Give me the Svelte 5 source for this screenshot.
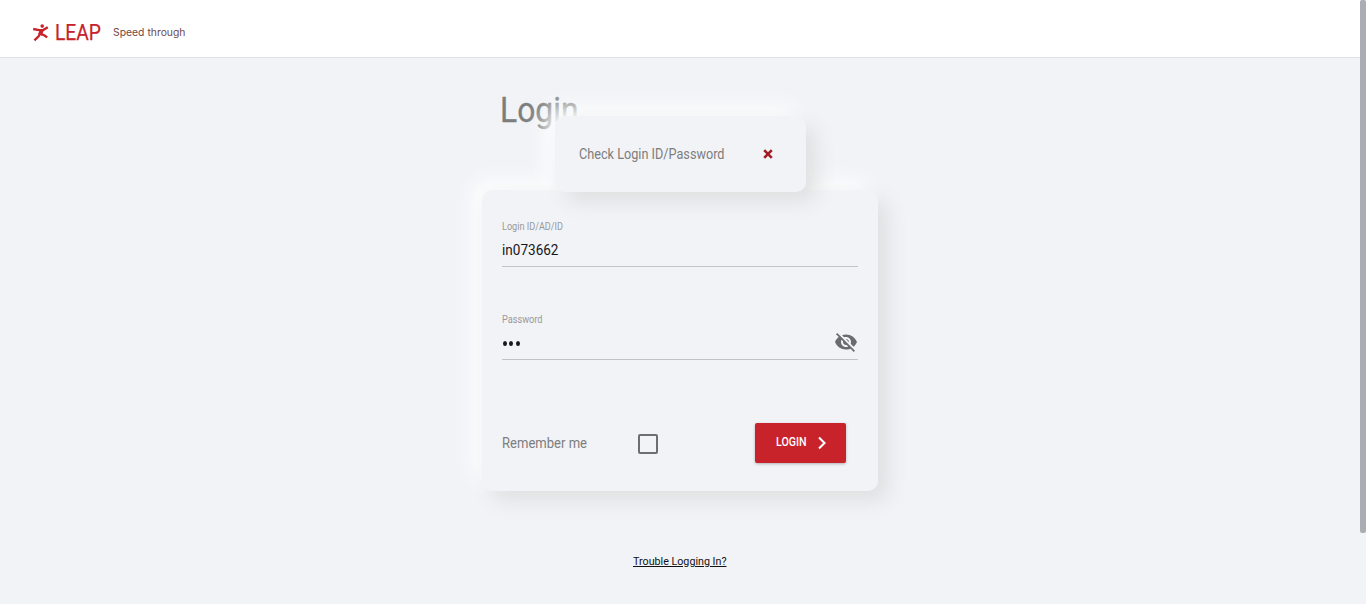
<script>
  let loginId = $state('in073662');

  // Condenses a label horizontally so that it fills the given width.
  function fit(node, width) {
    node.style.transform = `scaleX(${width / node.getBoundingClientRect().width})`;
  }
</script>

<div class="page">
  <header>
    <svg class="runner" viewBox="0 0 18 18" aria-hidden="true">
      <circle cx="10.2" cy="2.1" r="1.8" />
      <path d="M1.2 5 7 6.2 11.5 5.8 15.8 3.2M8 9.5 6.6 12.4 2.4 16.4M8.3 9.8 12.2 11.2 15.2 13.4" />
      <path class="torso" d="M10 5.6 8 10.8" />
    </svg>
    <span class="brand"><span class="fit" use:fit={46}>LEAP</span></span>
    <span class="tag"><span class="fit" use:fit={72.5}>Speed through</span></span>
  </header>

  <main>
    <h1><span class="fit" use:fit={78.5}>Login</span></h1>

    <form class="card" onsubmit={(e) => e.preventDefault()}>
      <div class="field">
        <span class="label"><span class="fit" use:fit={61}>Login ID/AD/ID</span></span>
        <span class="value"><span class="fit" use:fit={56.5}>{loginId}</span></span>
      </div>
      <div class="field second">
        <span class="label"><span class="fit" use:fit={40.5}>Password</span></span>
        <span class="value dots"><i></i><i></i><i></i></span>
        <svg class="eye" viewBox="0 0 24 24" aria-hidden="true">
          <path d="M12 7c2.76 0 5 2.24 5 5 0 .65-.13 1.26-.36 1.83l2.92 2.92c1.51-1.26 2.7-2.89 3.43-4.75-1.73-4.39-6-7.5-11-7.5-1.4 0-2.74.25-3.98.7l2.16 2.16C10.74 7.13 11.35 7 12 7zM2 4.27l2.28 2.28.46.46C3.08 8.3 1.78 10.02 1 12c1.73 4.39 6 7.5 11 7.5 1.55 0 3.03-.3 4.38-.84l.42.42L19.73 22 21 20.73 3.27 3 2 4.27zM7.53 9.8l1.55 1.55c-.05.21-.08.43-.08.65 0 1.66 1.34 3 3 3 .22 0 .44-.03.65-.08l1.55 1.55c-.67.33-1.41.53-2.2.53-2.76 0-5-2.24-5-5 0-.79.2-1.53.53-2.2zm4.31-.78l3.15 3.15.02-.16c0-1.66-1.34-3-3-3l-.17.01z" />
        </svg>
      </div>
      <div class="actions">
        <span class="remember"><span class="fit" use:fit={85}>Remember me</span></span>
        <span class="box"></span>
        <button>
          <span class="fit" use:fit={30.5}>LOGIN</span>
          <svg viewBox="0 0 10 14" aria-hidden="true"><path d="M2 1.5 7.5 7 2 12.5" /></svg>
        </button>
      </div>
    </form>

    <div class="alert">
      <span class="fit" use:fit={145.5}>Check Login ID/Password</span>
      <svg viewBox="0 0 10 10" aria-hidden="true"><path d="M1.2 1.2 8.8 8.8M8.8 1.2 1.2 8.8" /></svg>
    </div>

    <a href="#help"><span class="fit" use:fit={93.5}>Trouble Logging In?</span></a>
  </main>
  <div class="scroll"></div>
</div>

<style>
  :global(body) { background: #f1f3f7; overflow: hidden; }
  .page {
    height: 604px;
    display: grid;
    grid-template: 58px 1fr / 1fr 6px;
    font-family: Roboto, "Liberation Sans", sans-serif;
    color: #7d7d7d;
  }
  .fit { display: inline-block; white-space: nowrap; transform-origin: left center; }
  header {
    box-sizing: border-box;
    background: #fff;
    border-bottom: 1px solid #e1e2e6;
    display: flex;
    padding-left: 32px;
  }
  .runner { width: 18px; height: 18px; margin-top: 24px; fill: #c8222b; flex: none; }
  .runner path { fill: none; stroke: #c8222b; stroke-width: 2.3; }
  .runner .torso { stroke-width: 4; }
  .brand { width: 63px; padding-left: 4.5px; box-sizing: border-box; margin-top: 19px; font-size: 22.5px; line-height: 26px; color: #c8222b; -webkit-text-stroke: 0.25px #c8222b; }
  .tag { font-family: Inter, sans-serif; font-size: 10.5px; line-height: 16px; margin-top: 25px; color: #704846; }
  main {
    position: relative;
    width: 396px;
    justify-self: center;
    display: flex;
    flex-direction: column;
  }
  h1 { margin: 31px 0 0 17.5px; font-size: 35px; line-height: 43px; font-weight: 400; height: 101px; -webkit-text-stroke: 0.3px #7d7d7d; }
  .card {
    box-sizing: border-box;
    height: 301px;
    padding: 30px 20px 0;
    border-radius: 10px;
    background: #f1f3f7;
    box-shadow: 10px 10px 20px #e0e0e1, -10px -10px 20px #fcfdfd;
  }
  .field {
    box-sizing: border-box;
    height: 47px;
    border-bottom: 1px solid #c2c3c9;
    display: grid;
    grid-template: 14px 1fr / 1fr 24px;
  }
  .second { margin-top: 46px; }
  .label { font-size: 10px; line-height: 14px; color: #999; grid-column: 1 / 3; }
  .value { font-size: 14px; line-height: 20px; padding-top: 6px; color: #17171c; }
  .dots { display: flex; gap: 2.3px; padding: 14px 0 0 1px; }
  .dots i { width: 4px; height: 5px; border-radius: 50%; background: #17171c; }
  .eye { width: 24px; height: 24px; fill: #6c6c6e; margin: 3px 0 0 0; }
  .actions { display: flex; margin-top: 63px; }
  .remember { width: 136.4px; font-size: 14px; line-height: 20px; padding-top: 10px; }
  .box { box-sizing: border-box; width: 20px; height: 20px; margin-top: 11px; border: 2px solid #6e6e70; border-radius: 2px; }
  button {
    width: 91px;
    height: 40px;
    margin-left: 96.6px;
    padding: 0 0 2px 21.5px;
    display: flex;
    align-items: center;
    border: 0;
    border-radius: 2px;
    background: #c8222b;
    color: #fff;
    font: 500 12px Roboto, sans-serif;
    box-shadow: 0 1px 3px #0004;
  }
  button .fit { margin-right: 6px; }
  button svg { width: 10px; height: 14px; fill: none; stroke: #fff; stroke-width: 2.1; margin-top: 1px; }
  .alert {
    position: absolute;
    left: 73px;
    top: 58px;
    width: 251px;
    height: 76px;
    box-sizing: border-box;
    padding: 0 33px 0 23.5px;
    display: flex;
    align-items: center;
    justify-content: space-between;
    border-radius: 10px;
    background: #f1f3f7;
    font-size: 14px;
    box-shadow: 10px 10px 20px #e0e0e1, -10px -10px 20px #fcfdfd;
  }
  .alert svg { width: 10px; height: 10px; fill: none; stroke: #a11d26; stroke-width: 2.6; }
  a { margin: 63px 0 0 151px; font-size: 11px; line-height: 16px; color: #111; text-decoration: none; }
  a .fit { text-decoration: underline; }
  .scroll { grid-area: 1 / 2 / 3 / 3; height: 533px; background: #abadb3; border-radius: 2px; }
</style>
